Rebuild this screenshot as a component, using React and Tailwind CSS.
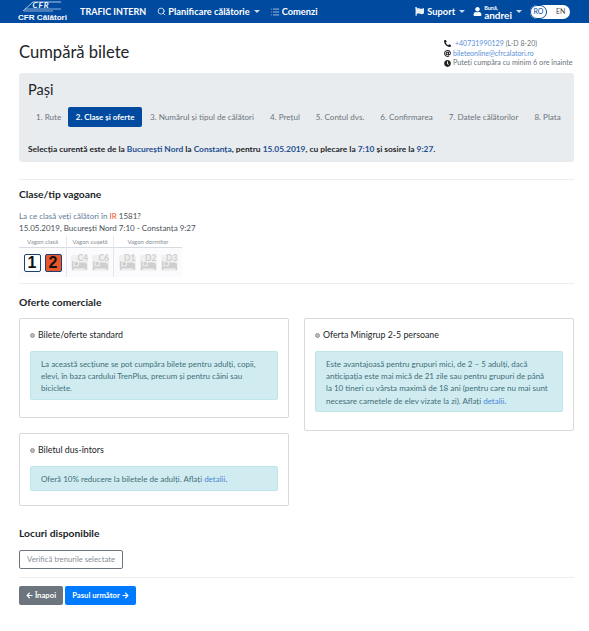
import React from "react";
import { FaBed, FaFlag, FaUser, FaPhone, FaAt, FaClock, FaArrowLeft, FaArrowRight } from "react-icons/fa";
import { Search, List } from "lucide-react";

const steps = [
  "1. Rute",
  "2. Clase și oferte",
  "3. Numărul și tipul de călători",
  "4. Prețul",
  "5. Contul dvs.",
  "6. Confirmarea",
  "7. Datele călătorilor",
  "8. Plata",
];

function Caret() {
  return <span className="ml-[4px] inline-block shrink-0 border-x-[3px] border-t-[3px] border-x-transparent border-t-white/80 align-middle" />;
}

function Logo() {
  return (
    <div className="flex w-[47px] shrink-0 flex-col items-center">
      <div className="relative h-[12px] w-[40px] overflow-hidden">
        <svg width="40" height="12" viewBox="0 0 40 12" className="absolute left-0 top-0">
          <path d="M0 10 L10 1 L38 1" fill="none" stroke="#dfe8f5" strokeWidth="0.8" />
          <path d="M2 8 H38 M1 10 H30" stroke="#cfdcf0" strokeWidth="0.7" />
        </svg>
        <span className="absolute left-[10px] top-[-1px] text-[8px] font-bold italic leading-[10px] tracking-[1px] text-white">CFR</span>
      </div>
      <span className="whitespace-nowrap font-['Liberation_Sans',sans-serif] text-[8.1px] font-bold leading-[9px] text-white">CFR Călători</span>
    </div>
  );
}

function Nav() {
  return (
    <nav className="flex h-[23px] items-center overflow-hidden whitespace-nowrap bg-[#004a9f] pl-[19px] pr-[15px] text-[9.3px] font-bold text-white">
      <Logo />
      <span className="ml-[14px] text-[9px]">TRAFIC INTERN</span>
      <Search size={9} className="ml-[11px] mr-[2px] shrink-0" strokeWidth={2} />
      <span>Planificare călătorie</span>
      <Caret />
      <List size={10} className="ml-[10px] mr-[2px] shrink-0" strokeWidth={1.5} />
      <span>Comenzi</span>
      <div className="ml-auto flex items-center">
        <FaFlag size={9} className="mr-[3px] opacity-90" />
        <span>Suport</span>
        <Caret />
        <FaUser size={9} className="ml-[8px] mr-[2px]" />
        <div className="flex flex-col items-start">
          <span className="text-[5.5px] leading-[6px]">Bună,</span>
          <span className="text-[10px] leading-[8px]">andrei</span>
        </div>
        <Caret />
        <div className="ml-[8px] mr-[4px] flex h-[14px] w-[40px] shrink-0 items-center rounded-full bg-white text-[7px] font-normal text-[#444]">
          <span className="flex h-[14px] w-[17px] items-center justify-center rounded-full border border-[#004a9f] text-[#004a9f]">RO</span>
          <span className="ml-[9px]">EN</span>
        </div>
      </div>
    </nav>
  );
}

function Contact() {
  return (
    <div className="w-[132px] whitespace-nowrap pt-[15px] text-[7px] leading-[10px] text-[#6c757d]">
      <div className="flex items-center">
        <FaPhone size={7} className="ml-[2px] mr-[4px] -scale-x-100 text-[#212529]" />
        <span className="text-[#5a8fd8]">+40731990129</span>
        <span className="ml-[2px]">(L-D 8-20)</span>
      </div>
      <div className="flex items-center">
        <FaAt size={7} className="ml-[2px] mr-[2px] text-[#212529]" />
        <span className="text-[#5a8fd8]">bileteonline@cfrcalatori.ro</span>
      </div>
      <div className="flex items-center">
        <FaClock size={7} className="ml-[2px] mr-[2px] text-[#212529]" />
        <span className="text-[7.2px]">Puteți cumpăra cu minim 6 ore înainte</span>
      </div>
    </div>
  );
}

function Steps() {
  return (
    <section className="mt-[3px] h-[89px] rounded-[3px] bg-[#e9ecef] px-[9px] pt-[8px]">
      <h2 className="text-[14.5px] font-normal leading-[18px] text-[#212529]">Pași</h2>
      <div className="mt-[8px] flex h-[20px] items-center whitespace-nowrap">
        {steps.map((s, i) => (
          <span
            key={s}
            className={
              i === 1
                ? "-ml-px flex h-[20px] items-center rounded-[2px] bg-[#004a9f] px-[7.5px] text-[8px] font-bold text-white"
                : "px-[8px] text-[8.1px] text-[#6c757d]"
            }
          >
            {s}
          </span>
        ))}
      </div>
      <p className="mt-[17px] whitespace-nowrap text-[8.4px] font-bold leading-[10px] text-[#212529]">
        Selecția curentă este de la <span className="text-[#1d4f91]">București Nord</span> la{" "}
        <span className="text-[#1d4f91]">Constanța</span>, pentru <span className="text-[#1d4f91]">15.05.2019</span>, cu plecare la{" "}
        <span className="text-[#1d4f91]">7:10</span> și sosire la <span className="text-[#1d4f91]">9:27</span>.
      </p>
    </section>
  );
}

function BedBox({ label }) {
  return (
    <div className="relative h-[16px] w-[17px] rounded-[2px] bg-[#f0f0f0] text-[#cfcfcf]">
      <span className="absolute right-0 top-[-2px] text-[8.5px] font-bold leading-[10px]">{label}</span>
      <FaBed size={15} className="absolute bottom-[-2px] left-px" />
    </div>
  );
}

function Wagons() {
  return (
    <div className="mt-[2px] flex w-[163px] text-center text-[6px] leading-[11px] text-[#868e96]">
      <div className="w-[48px] border-r border-[#e4e8ee]">
        <div className="border-b border-[#d5dbe3]">Vagon clasă</div>
        <div className="flex h-[29px] items-center justify-center gap-[4px] bg-[#fbfbfd]">
          <span className="flex h-[18px] w-[17px] items-center justify-center rounded-[2px] border border-[#1d3f72] bg-white font-['Liberation_Sans',sans-serif] text-[16px] font-bold text-[#111]">1</span>
          <span className="flex h-[18px] w-[17px] items-center justify-center rounded-[2px] border border-[#1d3f72] bg-[#e8562a] font-['Liberation_Sans',sans-serif] text-[16px] font-bold text-[#111]">2</span>
        </div>
      </div>
      <div className="w-[47px] border-r border-[#e4e8ee]">
        <div className="border-b border-[#d5dbe3]">Vagon cușetă</div>
        <div className="flex h-[29px] items-center justify-center gap-[4px] bg-[#fbfbfd]">
          <BedBox label="C4" />
          <BedBox label="C6" />
        </div>
      </div>
      <div className="w-[68px]">
        <div className="border-b border-[#d5dbe3]">Vagon dormitor</div>
        <div className="flex h-[29px] items-center justify-center gap-[4px] bg-[#fbfbfd]">
          <BedBox label="D1" />
          <BedBox label="D2" />
          <BedBox label="D3" />
        </div>
      </div>
    </div>
  );
}

function Offer({ title, children, bottom = "pb-[18px]" }) {
  return (
    <div className={`rounded-[2px] border border-[#d9d9d9] bg-white px-[10px] pt-[10px] ${bottom}`}>
      <div className="flex items-center text-[8.8px] leading-[12px] text-[#212529]">
        <span className="mr-[3px] h-[5px] w-[5px] rounded-full border border-[#999] bg-[#bbb]" />
        {title}
      </div>
      <div className="mt-[10px] rounded-[2px] border border-[#bee5eb] bg-[#d1ecf1] pb-[4.5px] pl-[10px] pr-[13px] pt-[6px] text-[8px] leading-[12.2px] text-[#3f6e77]">
        {children}
      </div>
    </div>
  );
}

export default function App() {
  return (
    <div className="h-[631px] overflow-hidden bg-white font-['Lato',sans-serif]">
      <Nav />
      <main className="pl-[19px] pr-[15px]">
        <div className="flex h-[47px] items-start justify-between">
          <h1 className="mt-[17px] text-[16.6px] font-normal leading-[24px] text-[#212529]">Cumpără bilete</h1>
          <Contact />
        </div>
        <Steps />
        <hr className="mt-[17px] border-[#eeeeee]" />
        <h3 className="mt-[7px] text-[10.3px] font-bold leading-[14px] text-[#212529]">Clase/tip vagoane</h3>
        <p className="mt-[9px] text-[8px] leading-[12px] text-[#495057]">
          <span className="text-[#5f7a96]">La ce clasă veți călători în</span> <span className="text-[#e8562a]">IR</span> 1581?
          <br />
          15.05.2019, București Nord 7:10 - Constanța 9:27
        </p>
        <Wagons />
        <hr className="mt-[6px] border-[#eeeeee]" />
        <h3 className="mt-[11px] text-[10.3px] font-bold leading-[14px] text-[#212529]">Oferte comerciale</h3>
        <div className="mt-[9px] flex items-start gap-[15px]">
          <div className="flex w-[270px] flex-col gap-[15px]">
            <Offer title="Bilete/oferte standard" bottom="pb-[17px]">
              La această secțiune se pot cumpăra bilete pentru adulți, copii, elevi, în baza cardului TrenPlus, precum și pentru câini sau biciclete.
            </Offer>
            <Offer title="Biletul dus-întors" bottom="pb-[14px]">
              Oferă 10% reducere la biletele de adulți. Aflați <span className="text-[#4a86d8]">detalii</span>.
            </Offer>
          </div>
          <div className="w-[270px]">
            <Offer title="Oferta Minigrup 2-5 persoane">
              Este avantajoasă pentru grupuri mici, de 2 – 5 adulți, dacă anticipația este mai mică de 21 zile sau pentru grupuri de până la 10 tineri cu vârsta maximă de 18 ani (pentru care nu mai sunt necesare carnetele de elev vizate la zi). Aflați <span className="text-[#4a86d8]">detalii</span>.
            </Offer>
          </div>
        </div>
        <h3 className="mt-[20px] text-[10.3px] font-bold leading-[14px] text-[#212529]">Locuri disponibile</h3>
        <button className="mt-[10px] block h-[19px] w-[104px] rounded-[2px] border border-[#6c757d] bg-white text-[7.7px] text-[#868e96]">
          Verifică trenurile selectate
        </button>
        <hr className="mt-[8px] border-[#eeeeee]" />
        <div className="mt-[8px] flex gap-[2px]">
          <button className="flex h-[19px] w-[44px] items-center justify-center gap-[2px] rounded-[2px] bg-[#6c757d] text-[7.7px] font-bold text-white">
            <FaArrowLeft size={7} /> Înapoi
          </button>
          <button className="flex h-[19px] w-[71px] items-center justify-center gap-[2px] rounded-[2px] bg-[#007bff] text-[7.7px] font-bold text-white">
            Pasul următor <FaArrowRight size={7} />
          </button>
        </div>
      </main>
    </div>
  );
}
